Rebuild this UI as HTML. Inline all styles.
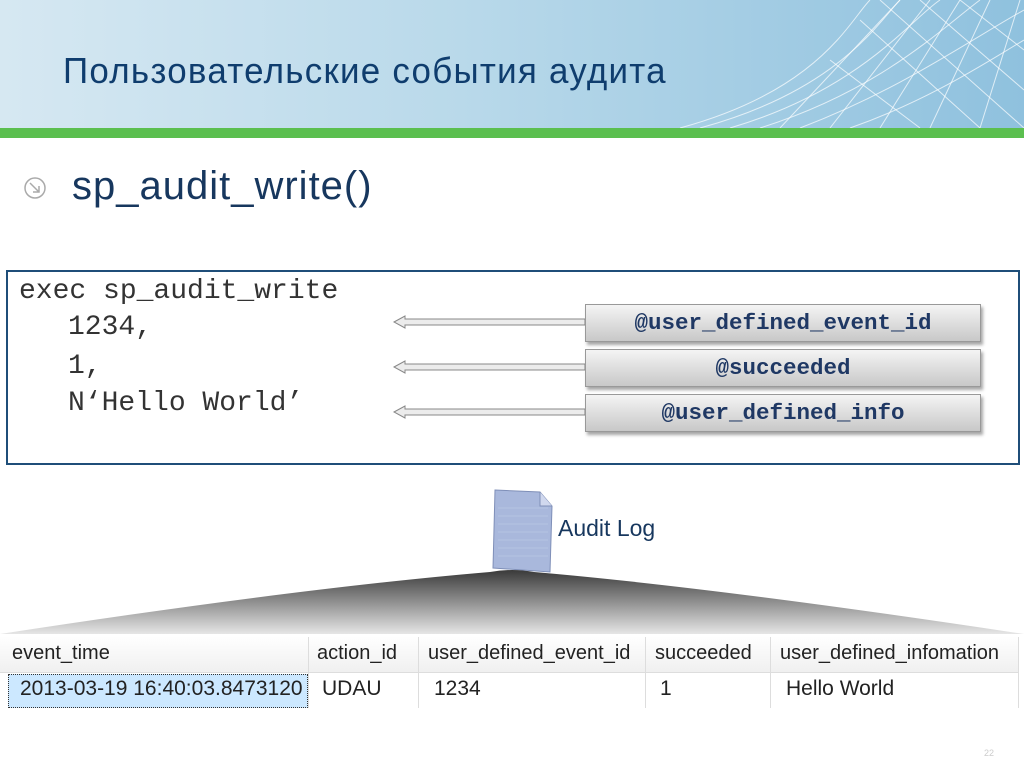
<!DOCTYPE html>
<html><head><meta charset="utf-8"><style>
body{margin:0;width:1024px;height:768px;position:relative;overflow:hidden;background:#fff;font-family:"Liberation Sans",sans-serif}
.hdr{position:absolute;left:0;top:0;width:1024px;height:128px;background:linear-gradient(90deg,#d6e8f2 0%,#b9d9ea 45%,#8fc1de 100%)}
.green{position:absolute;left:0;top:128px;width:1024px;height:10px;background:#5bbf4f}
.title{position:absolute;left:63px;top:50px;font-size:36px;color:#0f3d6e;letter-spacing:1.3px;transform-origin:left;transform:scaleX(.97)}
.sub{position:absolute;left:72px;top:164px;font-size:40px;color:#17375e;letter-spacing:1px}
.code{position:absolute;left:6px;top:270px;width:1010px;height:191px;border:2px solid #1f4e79}
.mono{position:absolute;font-family:"Liberation Mono",monospace;font-size:28px;color:#333}
.box{position:absolute;left:585px;width:394px;height:36px;background:linear-gradient(#f4f4f4,#c8c8c8);border:1px solid #999;box-shadow:2px 3px 3px rgba(0,0,0,.35);font-family:"Liberation Mono",monospace;font-weight:bold;font-size:22.5px;color:#1f3864;text-align:center;line-height:36px}
.arr{position:absolute;left:393px;width:192px;height:14px}
.cell{position:absolute;font-size:20px;color:#222;white-space:nowrap}
</style></head><body>
<div class="hdr">
<svg width="1024" height="128" style="position:absolute;left:0;top:0">
<g stroke="#fff" stroke-opacity=".7" fill="none" stroke-width="1">
<path d="M680 128 C820 90 850 20 870 0"/><path d="M700 128 C840 90 880 20 900 0"/><path d="M730 128 C860 90 910 20 940 0"/><path d="M760 128 C880 90 940 30 980 0"/><path d="M800 128 C900 90 970 40 1024 10"/><path d="M850 128 C930 100 990 60 1024 40"/>
<path d="M900 0 L780 128"/><path d="M930 0 L830 128"/><path d="M960 0 L880 128"/><path d="M990 0 L930 128"/><path d="M1020 0 L980 128"/>
<path d="M880 0 L1024 128"/><path d="M860 20 L980 128"/><path d="M830 60 L920 128"/><path d="M920 0 L1024 90"/><path d="M960 0 L1024 50"/>
</g></svg></div>
<div class="green"></div>
<div class="title">Пользовательские события аудита</div>
<svg style="position:absolute;left:23px;top:176px" width="24" height="24"><circle cx="12" cy="12" r="10" fill="none" stroke="#aaa" stroke-width="1.5"/><path d="M7 7 L16 16 M16 10 L16 16 L10 16" stroke="#aaa" stroke-width="1.5" fill="none"/></svg>
<div class="sub">sp_audit_write()</div>
<div class="code"></div>
<div class="mono" style="left:19px;top:276px">exec sp_audit_write</div>
<div class="mono" style="left:68px;top:312px">1234,</div>
<div class="mono" style="left:68px;top:351px">1,</div>
<div class="mono" style="left:68px;top:388px">N‘Hello World’</div>
<svg class="arr" style="top:315px" viewBox="0 0 192 14"><path d="M1 7 L12 1 L12 4 L192 4 L192 10 L12 10 L12 13 Z" fill="#ececec" stroke="#888"/></svg>
<svg class="arr" style="top:360px" viewBox="0 0 192 14"><path d="M1 7 L12 1 L12 4 L192 4 L192 10 L12 10 L12 13 Z" fill="#ececec" stroke="#888"/></svg>
<svg class="arr" style="top:405px" viewBox="0 0 192 14"><path d="M1 7 L12 1 L12 4 L192 4 L192 10 L12 10 L12 13 Z" fill="#ececec" stroke="#888"/></svg>
<div class="box" style="top:304px">@user_defined_event_id</div>
<div class="box" style="top:349px">@succeeded</div>
<div class="box" style="top:394px">@user_defined_info</div>
<svg style="position:absolute;left:490px;top:488px" width="66" height="88"><path d="M5 2 L50 4 L62 18 L60 84 L3 80 Z" fill="#a9b8dc" stroke="#7f8fb8"/><path d="M50 4 L50 18 L62 18" fill="#d0d8ee" stroke="#7f8fb8"/><g stroke="#c2cde8" stroke-width=".6"><path d="M8 20 H58 M8 28 H58 M8 36 H58 M8 44 H58 M8 52 H58 M8 60 H58 M8 68 H58"/></g></svg>
<div style="position:absolute;left:558px;top:515px;font-size:23px;color:#17375e">Audit Log</div>
<svg style="position:absolute;left:0;top:568px" width="1024" height="70"><defs><linearGradient id="g" x1="0" y1="0" x2="0" y2="1"><stop offset="0" stop-color="#3a3a3a"/><stop offset="1" stop-color="#e6e6e6"/></linearGradient></defs><path d="M0 66 Q300 20 490 4 Q512 0 534 4 Q720 20 1024 66 Z" fill="url(#g)"/></svg>
<div style="position:absolute;left:0;top:636px;width:1018px;height:36px;background:linear-gradient(#fff,#f0f0f0);border-bottom:1px solid #ddd"></div>
<div style="position:absolute;left:8px;top:674px;width:298px;height:32px;background:#cce8ff;border:1px dotted #333"></div>
<div style="position:absolute;left:308px;top:637px;width:1px;height:71px;background:#ddd"></div>
<div style="position:absolute;left:418px;top:637px;width:1px;height:71px;background:#ddd"></div>
<div style="position:absolute;left:645px;top:637px;width:1px;height:71px;background:#ddd"></div>
<div style="position:absolute;left:770px;top:637px;width:1px;height:71px;background:#ddd"></div>
<div style="position:absolute;left:1018px;top:637px;width:1px;height:71px;background:#ddd"></div>
<div class="cell" style="left:12px;top:642px">event_time</div>
<div class="cell" style="left:317px;top:642px">action_id</div>
<div class="cell" style="left:428px;top:642px">user_defined_event_id</div>
<div class="cell" style="left:655px;top:642px">succeeded</div>
<div class="cell" style="left:780px;top:642px">user_defined_infomation</div>
<div class="cell" style="left:20px;top:677px;font-size:21px">2013-03-19 16:40:03.8473120</div>
<div class="cell" style="left:322px;top:677px;font-size:21px">UDAU</div>
<div class="cell" style="left:434px;top:677px;font-size:21px">1234</div>
<div class="cell" style="left:660px;top:677px;font-size:21px">1</div>
<div class="cell" style="left:786px;top:677px;font-size:21px">Hello World</div>
<div style="position:absolute;left:984px;top:748px;font-size:9px;color:#ccc">22</div>
</body></html>
